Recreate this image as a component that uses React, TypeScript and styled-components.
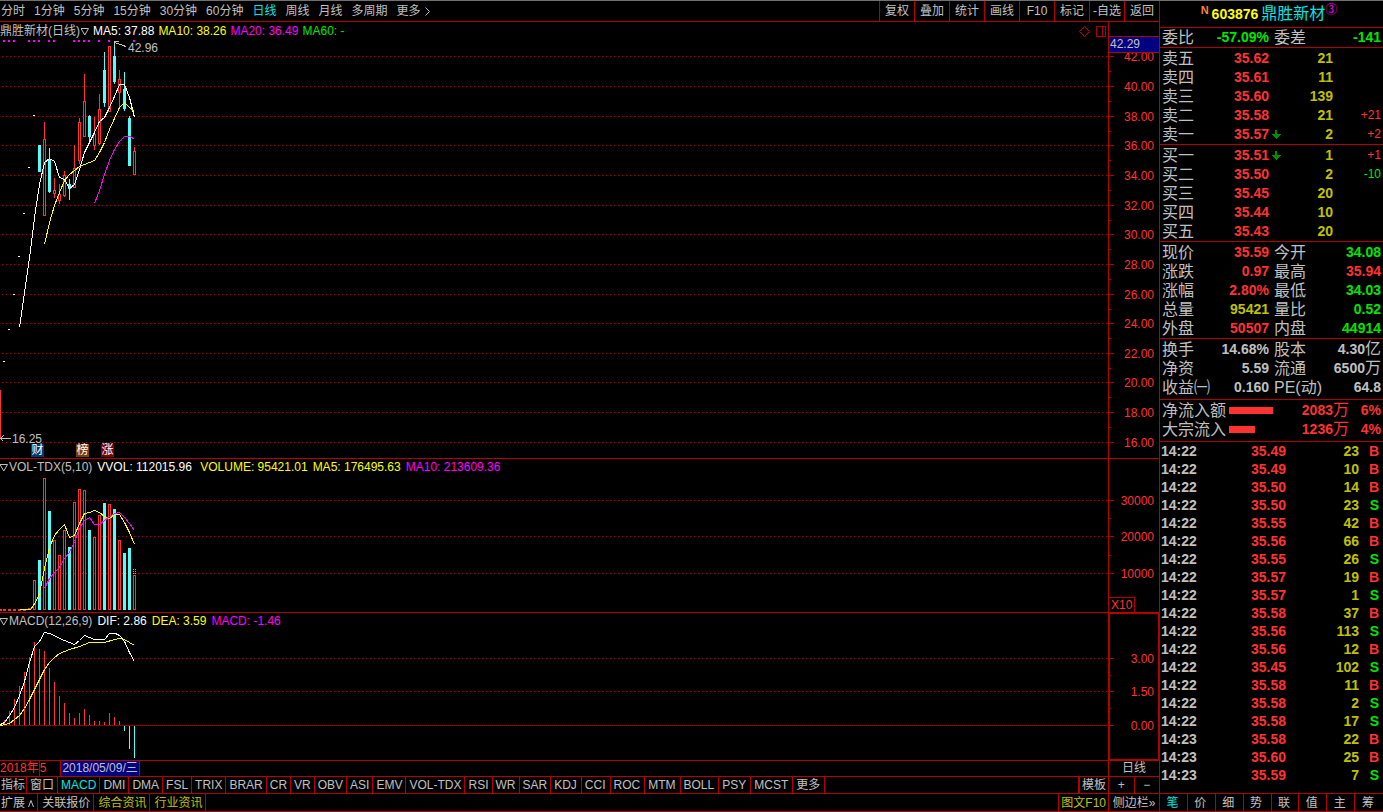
import React from "react";
import styled, { createGlobalStyle } from "styled-components";

const color = {
  line: "#b40000",
  red: "#ff3232",
  cyan: "#54fcfc",
  active: "#00e6e6",
  green: "#00e600",
  text: "#c0c0c0",
  gold: "#c0c000",
  yellow: "#ffff00",
  magenta: "#ff00ff",
  navy: "#000080",
};

const GlobalStyle = createGlobalStyle`
  * { box-sizing: border-box; }
  body {
    margin: 0;
    background: #000;
    color: ${color.text};
    font-family: "Liberation Sans", "Noto Sans CJK SC", sans-serif;
    font-size: 12px;
  }
`;

/* ---------- shell ---------- */

const Page = styled.div`
  display: grid;
  grid-template-columns: minmax(0, 1fr) 224px;
  min-height: 100vh;
  border-top: 1px solid #707070;
  background: #000;
`;

const Workspace = styled.main`
  display: flex;
  flex-direction: column;
  min-width: 0;
`;

const Button = styled.button<{ $color?: string }>`
  margin: 0;
  padding: 0;
  border: 0;
  background: none;
  color: ${(p) => p.$color ?? color.text};
  font: inherit;
  line-height: inherit;
  white-space: nowrap;
  cursor: pointer;
`;

const Toolbar = styled.nav`
  display: flex;
  justify-content: space-between;
  height: 21px;
  line-height: 19px;
  border-bottom: 1px solid ${color.line};
`;

const Periods = styled.div`
  display: flex;
  align-items: center;
  gap: 9px;
  padding: 1px 0 0 1px;
`;

const MoreButton = styled(Button)`
  display: flex;
  align-items: center;
  gap: 4px;
`;

const Tools = styled.div`
  display: flex;
`;

const ToolButton = styled(Button)`
  width: 35px;
  padding-top: 1px;
  border-left: 1px solid ${color.line};
  text-align: center;
`;

/* ---------- chart panes ---------- */

const Pane = styled.section<{ $grow?: boolean }>`
  display: grid;
  grid-template-columns: minmax(0, 1fr) 51px;
  flex: ${(p) => (p.$grow ? "1 0 auto" : "0 0 auto")};
  border-bottom: 1px solid ${color.line};
`;

const Plot = styled.div`
  position: relative;
  min-width: 0;
  overflow: hidden;
`;

const Legend = styled.div<{ $height: number; $gap: number }>`
  display: flex;
  align-items: center;
  gap: ${(p) => p.$gap}px;
  height: ${(p) => p.$height}px;
  line-height: ${(p) => p.$height}px;
  white-space: nowrap;
`;

const LegendItem = styled.span<{ $color: string }>`
  color: ${(p) => p.$color};
`;

const LegendTitle = styled.span`
  display: flex;
  align-items: center;
  gap: 1px;
`;

const LegendTools = styled.span`
  display: flex;
  align-items: center;
  gap: 6px;
  margin-left: auto;
  padding-right: 1px;
`;

const Drawing = styled.svg<{ $height: number }>`
  display: block;
  width: 100%;
  height: ${(p) => p.$height}px;
  overflow: hidden;
`;

const Axis = styled.div<{ $framed?: boolean }>`
  position: relative;
  border-left: 1px solid ${color.line};
  box-shadow: ${(p) => (p.$framed ? `inset 0 0 0 1px ${color.line}` : "none")};
`;

const CursorPrice = styled.div`
  position: absolute;
  top: 14px;
  left: 0;
  right: 0;
  height: 17px;
  padding-left: 1px;
  border: solid ${color.line};
  border-width: 1px 0;
  background: ${color.navy};
  line-height: 14px;
`;

const Multiplier = styled.div`
  position: absolute;
  bottom: 0;
  left: 0;
  height: 15px;
  padding: 0 2px;
  border: solid ${color.line};
  border-width: 1px 1px 0 0;
  color: ${color.red};
  line-height: 15px;
`;

const Marker = styled.span<{ $x: number; $y: number }>`
  position: absolute;
  left: ${(p) => p.$x}px;
  top: ${(p) => p.$y}px;
  line-height: 12px;
`;

const Badge = styled(Marker)<{ $fill: string }>`
  width: 13px;
  height: 13px;
  background: ${(p) => p.$fill};
  color: #fff;
  line-height: 13px;
  text-align: center;
`;

/* ---------- bottom strips ---------- */

const Strip = styled.div<{ $height: number; $line?: number }>`
  display: grid;
  grid-template-columns: minmax(0, 1fr) 51px;
  height: ${(p) => p.$height}px;
  line-height: ${(p) => p.$line ?? p.$height - 1}px;
  border-bottom: 1px solid ${color.line};
`;

const StripMain = styled.div`
  display: flex;
  min-width: 0;
  overflow: hidden;
  white-space: nowrap;
`;

const StripSide = styled.div`
  display: flex;
  justify-content: center;
  border-left: 1px solid ${color.line};
`;

const Month = styled.span`
  color: ${color.red};
`;

const MonthDay = styled(Month)`
  border-left: 1px solid ${color.line};
`;

const CursorDate = styled.span`
  margin-left: 14px;
  padding: 0 1px;
  border: solid ${color.line};
  border-width: 0 1px;
  background: ${color.navy};
`;

const Tab = styled(Button)`
  padding: 0 3px;
  border-right: 1px solid ${color.line};
  &:first-child {
    padding: 0 1px;
  }
  &:nth-child(n + 18) {
    padding-right: 4px;
  }
`;

const LinkTab = styled.a<{ $color?: string }>`
  padding: 0 3px 0 4px;
  border-right: 1px solid ${color.line};
  color: ${(p) => p.$color ?? color.text};
  text-decoration: none;
  &:first-child {
    padding-left: 1px;
  }
`;

const EndButton = styled(Button)<{ $edge: number }>`
  margin-left: auto;
  padding: 0 2px;
  border-left: ${(p) => p.$edge}px solid ${color.line};
`;

const ZoomButton = styled(Button)`
  flex: 1;
  & + & {
    border-left: 1px solid ${color.line};
  }
`;

/* ---------- quote panel ---------- */

const Panel = styled.aside`
  display: flex;
  flex-direction: column;
  border-left: 1px solid ${color.line};
  font-size: 14px;
`;

const StockHead = styled.header`
  display: flex;
  align-items: center;
  justify-content: center;
  height: 27px;
  padding-right: 5px;
  border-bottom: 1px solid ${color.line};
  line-height: 26px;
`;

const StockFlag = styled.span`
  align-self: flex-start;
  margin-right: 3px;
  color: #ff8040;
  font-size: 11px;
  font-weight: 700;
  line-height: 18px;
`;

const StockCode = styled.span`
  margin-right: 3px;
  color: ${color.yellow};
  font-weight: 700;
`;

const StockName = styled.span`
  color: ${color.active};
  font-size: 16px;
`;

const StockNote = styled.span`
  align-self: flex-start;
  color: ${color.magenta};
  font-size: 12px;
  line-height: 18px;
`;

const Block = styled.div<{ $top?: number; $bottom?: number }>`
  padding: ${(p) => p.$top ?? 1}px 2px ${(p) => p.$bottom ?? 0}px;
  border-bottom: 1px solid ${color.line};
`;

const Ticks = styled.div`
  flex: 1;
  padding: 0 2px 0 1px;
  border-bottom: 1px solid ${color.line};
`;

const Table = styled.table`
  width: 100%;
  border-collapse: collapse;
  table-layout: fixed;
`;

const Label = styled.th<{ $w?: number; $gap?: number }>`
  width: ${(p) => (p.$w ? `${p.$w}px` : "auto")};
  height: 19px;
  padding: 0 0 0 ${(p) => p.$gap ?? 0}px;
  color: ${color.text};
  font-size: 16px;
  font-weight: 400;
  line-height: 19px;
  text-align: left;
  white-space: nowrap;
`;

const Num = styled.td<{ $w?: number; $color?: string }>`
  width: ${(p) => (p.$w ? `${p.$w}px` : "auto")};
  height: 19px;
  padding: 0;
  color: ${(p) => p.$color ?? color.text};
  font-weight: 700;
  line-height: 19px;
  text-align: right;
  white-space: nowrap;
`;

const Delta = styled(Num)`
  font-size: 12px;
  font-weight: 400;
`;

const Unit = styled.span`
  font-size: 16px;
  font-weight: 400;
  line-height: 1;
`;

const ArrowCell = styled.td`
  width: 12px;
  padding: 0 0 0 3px;
  line-height: 0;
`;

const FlowCell = styled.td`
  padding: 0 0 0 3px;
`;

const FlowBar = styled.div`
  height: 7px;
  background: ${color.red};
`;

const TickCell = styled.td<{ $w?: number; $color?: string; $left?: boolean }>`
  width: ${(p) => (p.$w ? `${p.$w}px` : "auto")};
  height: 18px;
  padding: 0;
  color: ${(p) => p.$color ?? color.text};
  font-weight: 700;
  line-height: 18px;
  text-align: ${(p) => (p.$left ? "left" : "right")};
`;

const SideCell = styled(TickCell)`
  padding-right: 2px;
`;

const PanelTabs = styled.nav`
  display: grid;
  grid-template-columns: repeat(8, 1fr);
  height: 18px;
  border-bottom: 1px solid ${color.line};
  font-size: 12px;
  line-height: 17px;
`;

const PanelTab = styled(Button)`
  padding: 1px 2px 0 0;
  line-height: 16px;
  border-right: 1px solid ${color.line};
  &:last-child {
    border-right: 0;
  }
`;

/* ---------- data ---------- */

const periods = ["分时", "1分钟", "5分钟", "15分钟", "30分钟", "60分钟", "日线", "周线", "月线", "多周期"];
const tools = ["复权", "叠加", "统计", "画线", "F10", "标记", "-自选", "返回"];
const indicators =
  "指标 窗口 MACD DMI DMA FSL TRIX BRAR CR VR OBV ASI EMV VOL-TDX RSI WR SAR KDJ CCI ROC MTM BOLL PSY MCST 更多".split(" ");

type Level = [number, string];
const priceLevels: Level[] = [
  [56, "42.00"], [86, "40.00"], [116, "38.00"], [145, "36.00"], [175, "34.00"], [205, "32.00"], [234, "30.00"],
  [264, "28.00"], [294, "26.00"], [323, "24.00"], [353, "22.00"], [382, "20.00"], [412, "18.00"], [442, "16.00"],
];
const volumeLevels: Level[] = [[500, "30000"], [536, "20000"], [573, "10000"]];
const macdLevels: Level[] = [[658, "3.00"], [691, "1.50"], [725, "0.00"]];

/* x, rising, high, body top, body bottom, low */
type Candle = [number, boolean, number, number, number, number];
const candles: Candle[] = [
  [39, false, 145, 145, 172, 172], [44, true, 122, 139, 216, 216], [49, false, 148, 160, 192, 193],
  [54, true, 178, 190, 194, 198], [59, true, 184, 194, 201, 204], [64, true, 171, 175, 196, 197],
  [69, false, 179, 184, 189, 200], [74, true, 145, 168, 188, 188], [79, true, 118, 122, 161, 164],
  [84, true, 74, 101, 137, 137], [89, false, 115, 116, 137, 144], [94, true, 117, 134, 146, 150],
  [99, true, 94, 109, 144, 145], [104, false, 52, 70, 103, 107], [109, true, 46, 46, 112, 112],
  [114, false, 42, 56, 82, 84], [119, true, 70, 79, 93, 107], [124, false, 72, 89, 109, 111],
  [129, false, 116, 118, 166, 166], [134, true, 147, 151, 175, 175],
];
const limitDays = [[4, 361], [9, 329], [14, 294], [19, 256], [24, 213], [29, 167], [34, 115]];
const eventDots = [4, 9, 14, 29, 34, 39, 49, 54, 74, 79, 84, 89, 99, 109, 134];

const ma5 =
  "19,327 30,250 35,210 39,184 44,162 49,158 54,161 59,177 64,179 69,188 74,184 79,169 84,152 89,142 94,132 99,121 104,117 109,107 114,96 119,84 124,84 129,97 134,117";
const ma10 =
  "44,244 49,222 54,205 59,192 64,180 69,174 74,170 79,166 84,164 89,162 94,160 99,152 104,142 109,129 114,118 119,107 124,102 129,107 134,111";
const ma20 = "94,203 99,190 104,174 109,160 114,149 119,141 124,136 130,136 134,139";

/* x, rising, top */
const volumes: [number, boolean, number][] = [
  [34, true, 580], [39, false, 560], [44, true, 478], [49, false, 511], [54, true, 540], [59, true, 555],
  [64, true, 530], [69, false, 547], [74, true, 502], [79, true, 489], [84, true, 490], [89, false, 530],
  [94, true, 537], [99, true, 515], [104, false, 503], [109, true, 504], [114, false, 509], [119, true, 540],
  [124, false, 553], [129, false, 548], [134, true, 575],
];
const volMa5 =
  "19,609 30,609 35,602 39,593 44,568 49,547 54,535 59,529 64,524 69,537 74,535 79,523 84,513 89,512 94,510 99,512 104,516 109,518 114,514 119,514 124,522 129,532 134,544";
const volMa10 =
  "44,588 49,578 54,572 59,567 64,558 69,552 74,541 79,528 84,520 89,517 94,524 99,524 104,520 109,516 114,513 119,512 124,517 129,523 134,530";

const macdBars = [
  720, 711, 699, 686, 672, 657, 642, 649, 651, 668, 682, 696, 703, 713, 718, 713, 709, 715, 721, 721, 722, 713, 717,
  721, 730, 748, 757,
];
const dif =
  "0,724 4,722 9,715 14,707 19,695 24,681 29,662 34,646 39,641 44,632 49,633 54,635 59,638 64,640 69,642 74,644 79,640 84,635 89,637 94,639 104,639 109,633 115,633 119,635 124,641 129,652 134,661";
const dea =
  "0,725 9,723 14,719 19,715 24,708 29,699 34,689 39,679 44,669 49,662 54,657 59,653 64,651 69,649 79,646 89,642 104,642 114,639 119,638 124,639 129,642 134,645";

const asks: string[][] = [
  ["卖五", "35.62", "21", ""], ["卖四", "35.61", "11", ""], ["卖三", "35.60", "139", ""],
  ["卖二", "35.58", "21", "+21"], ["卖一", "35.57", "2", "+2"],
];
const bids: string[][] = [
  ["买一", "35.51", "1", "+1"], ["买二", "35.50", "2", "-10"], ["买三", "35.45", "20", ""],
  ["买四", "35.44", "10", ""], ["买五", "35.43", "20", ""],
];

type Quote = [string, string, string, string, string, string];
const quotes: Quote[] = [
  ["现价", "35.59", color.red, "今开", "34.08", color.green],
  ["涨跌", "0.97", color.red, "最高", "35.94", color.red],
  ["涨幅", "2.80%", color.red, "最低", "34.03", color.green],
  ["总量", "95421", color.gold, "量比", "0.52", color.green],
  ["外盘", "50507", color.red, "内盘", "44914", color.green],
];
const ratios: Quote[] = [
  ["换手", "14.68%", color.text, "股本", "4.30亿", color.text],
  ["净资", "5.59", color.text, "流通", "6500万", color.text],
  ["收益㈠", "0.160", color.text, "PE(动)", "64.8", color.text],
];
const flows: [string, number, string, string][] = [
  ["净流入额", 44, "2083", "6%"],
  ["大宗流入", 26, "1236", "4%"],
];
const ticks = [
  "14:22 35.49 23 B", "14:22 35.49 10 B", "14:22 35.50 14 B", "14:22 35.50 23 S", "14:22 35.55 42 B",
  "14:22 35.56 66 B", "14:22 35.55 26 S", "14:22 35.57 19 B", "14:22 35.57 1 S", "14:22 35.58 37 B",
  "14:22 35.56 113 S", "14:22 35.56 12 B", "14:22 35.45 102 S", "14:22 35.58 11 B", "14:22 35.58 2 S",
  "14:22 35.58 17 S", "14:23 35.58 22 B", "14:23 35.60 25 B", "14:23 35.59 7 S",
].map((t) => t.split(" "));

/* ---------- drawing helpers ---------- */

const Triangle = () => (
  <svg width="8" height="9" viewBox="0 0 8 9" fill="none" stroke={color.text}>
    <path d="M0 1.5H7.500L3.800 8Z" />
  </svg>
);

const GridLines = ({ levels, solidLast }: { levels: Level[]; solidLast?: boolean }) => (
  <>
    {levels.map(([y], i) => (
      <line
        key={y}
        x1="2"
        x2="100%"
        y1={y + 0.5}
        y2={y + 0.5}
        stroke={color.line}
        strokeDasharray={solidLast && i === levels.length - 1 ? "1 1" : "1 3"}
      />
    ))}
  </>
);

const Curve = ({ points, stroke }: { points: string; stroke: string }) => (
  <polyline points={points} fill="none" stroke={stroke} transform="translate(0.5 0.5)" />
);

const AxisScale = ({ levels, origin, height }: { levels: Level[]; origin: number; height: number }) => (
  <Drawing $height={height} shapeRendering="crispEdges">
    <g transform={`translate(0 ${-origin})`}>
      {levels.map(([y, label], i) => {
        const next = levels[i + 1];
        const mid = next ? Math.round((y + next[0]) / 2) : 0;
        return (
          <g key={label}>
            <rect x="0" y={y} width="5" height="1" fill={color.line} />
            {next && <rect x="0" y={mid} width="2" height="1" fill={color.line} />}
            <text x="45" y={y + 5} textAnchor="end" fontSize="12" fill={color.red}>
              {label}
            </text>
          </g>
        );
      })}
    </g>
  </Drawing>
);

const PriceDrawing = () => (
  <Drawing $height={418} shapeRendering="crispEdges">
    <g transform="translate(0 -40)">
      <GridLines levels={priceLevels} />
      {eventDots.map((x) => (
        <rect key={x} x={x - 1} y="40" width="2" height="2" fill={color.magenta} />
      ))}
      <rect x="0" y="390" width="1" height="48" fill={color.red} />
      {limitDays.map(([x, y]) => (
        <rect key={x} x={x - 1} y={y} width="2" height="1" fill="#fff" />
      ))}
      {candles.map(([x, up, high, top, bottom, low]) =>
        up ? (
          <g key={x} fill={color.red}>
            <rect x={x} y={high} width="1" height={top - high} />
            <rect x={x} y={bottom} width="1" height={low - bottom} />
            <rect x={x - 0.5} y={top + 0.5} width="2" height={bottom - top - 1} fill="none" stroke={color.red} />
          </g>
        ) : (
          <g key={x} fill={color.cyan}>
            <rect x={x} y={high} width="1" height={low - high} />
            <rect x={x - 1} y={top} width="3" height={bottom - top} />
          </g>
        ),
      )}
      <Curve points={ma5} stroke="#fff" />
      <Curve points={ma10} stroke={color.yellow} />
      <Curve points={ma20} stroke={color.magenta} />
      <path d="M126 46.500L114.500 42.500M118.500 41.500H114.500V46" fill="none" stroke={color.text} />
      <path d="M11 438.500H0.500M3.500 435.500L0.500 438.500L3.500 441.500" fill="none" stroke={color.text} />
    </g>
  </Drawing>
);

const VolumeDrawing = () => (
  <Drawing $height={137} shapeRendering="crispEdges">
    <g transform="translate(0 -475)">
      <GridLines levels={volumeLevels} />
      {[0, 4, 9, 14, 19, 24].map((x) => (
        <rect key={x} x={x - 1} y="609" width="3" height="2" fill={color.red} />
      ))}
      <rect x="28" y="608" width="3" height="2" fill={color.red} />
      {volumes.map(([x, up, top]) =>
        up ? (
          <rect key={x} x={x - 0.5} y={top + 0.5} width="2" height={609 - top} fill="none" stroke={color.red} />
        ) : (
          <rect key={x} x={x - 1} y={top} width="3" height={610 - top} fill={color.cyan} />
        ),
      )}
      {[569, 571, 573].map((y) => (
        <path key={y} d={`M133 ${y + 0.5}h1m1 0h1`} stroke={color.gold} />
      ))}
      <Curve points={volMa5} stroke={color.yellow} />
      <Curve points={volMa10} stroke={color.magenta} />
    </g>
  </Drawing>
);

const MacdDrawing = () => (
  <Drawing $height={131} shapeRendering="crispEdges">
    <g transform="translate(0 -629)">
      <GridLines levels={macdLevels} solidLast />
      {macdBars.map((y, i) => (
        <rect
          key={i}
          x={4 + i * 5}
          y={Math.min(y, 726)}
          width="1"
          height={Math.abs(725 - y)}
          fill={y < 725 ? color.red : color.cyan}
        />
      ))}
      <Curve points={dif} stroke="#fff" />
      <Curve points={dea} stroke={color.yellow} />
    </g>
  </Drawing>
);

/* ---------- panel parts ---------- */

const OrderTable = ({ rows }: { rows: string[][] }) => (
  <Table>
    <tbody>
      {rows.map(([label, price, qty, delta]) => (
        <tr key={label}>
          <Label scope="row" $w={48}>{label}</Label>
          <Num $w={59} $color={color.red}>{price}</Num>
          <ArrowCell>
            {label.endsWith("一") && (
              <svg width="9" height="10" viewBox="0 0 9 10" fill="#008c00" shapeRendering="crispEdges">
                <path d="M3 0H5V4H9V5H8V6H7V7H6V8H5V9H4V8H3V7H2V6H1V5H0V4H3Z" />
              </svg>
            )}
          </ArrowCell>
          <Num $w={52} $color={color.gold}>{qty}</Num>
          <Delta $color={delta.startsWith("-") ? color.green : color.red}>{delta}</Delta>
        </tr>
      ))}
    </tbody>
  </Table>
);

const withUnit = (value: string) => {
  const unit = /[亿万]$/.test(value) ? value.slice(-1) : "";
  return (
    <>
      {unit ? value.slice(0, -1) : value}
      {unit && <Unit>{unit}</Unit>}
    </>
  );
};

const QuoteTable = ({ rows }: { rows: Quote[] }) => (
  <Table>
    <tbody>
      {rows.map(([a, av, ac, b, bv, bc]) => (
        <tr key={a}>
          <Label scope="row" $w={48}>{a}</Label>
          <Num $w={59} $color={ac}>{av}</Num>
          <Label scope="row" $w={57} $gap={5}>{b}</Label>
          <Num $color={bc}>{withUnit(bv)}</Num>
        </tr>
      ))}
    </tbody>
  </Table>
);

export default function App() {
  return (
    <>
      <GlobalStyle />
      <Page>
        <Workspace>
          <Toolbar>
            <Periods>
              {periods.map((p) => (
                <Button key={p} $color={p === "日线" ? color.active : undefined}>{p}</Button>
              ))}
              <MoreButton>
                更多
                <svg width="5" height="9" viewBox="0 0 5 9" fill="none" stroke={color.text}>
                  <path d="M0.500 0.500L4.500 4.500L0.500 8.500" />
                </svg>
              </MoreButton>
            </Periods>
            <Tools>
              {tools.map((t) => (
                <ToolButton key={t}>{t}</ToolButton>
              ))}
            </Tools>
          </Toolbar>

          <Pane>
            <Plot>
              <Legend $height={18} $gap={4}>
                <LegendTitle>鼎胜新材(日线) <Triangle /></LegendTitle>
                <LegendItem $color="#fff">MA5: 37.88</LegendItem>
                <LegendItem $color={color.yellow}>MA10: 38.26</LegendItem>
                <LegendItem $color={color.magenta}>MA20: 36.49</LegendItem>
                <LegendItem $color={color.green}>MA60: -</LegendItem>
                <LegendTools>
                  <svg width="11" height="11" viewBox="0 0 11 11" fill="none" stroke="#d80000">
                    <path d="M5.500 0.500L10.500 5.500L5.500 10.500L0.500 5.500Z" />
                  </svg>
                  <svg width="11" height="11" viewBox="0 0 11 11" fill="none" stroke={color.line}>
                    <path d="M0.500 0.500H9.500V10.500H0.500ZM6.500 0.500V10.500" />
                  </svg>
                </LegendTools>
              </Legend>
              <PriceDrawing />
              <Marker $x={128} $y={20}>42.96</Marker>
              <Marker $x={12} $y={411}>16.25</Marker>
              <Badge $x={31} $y={422} $fill="#003870">财</Badge>
              <Badge $x={76} $y={422} $fill="#804000">榜</Badge>
              <Badge $x={101} $y={422} $fill="#800000">涨</Badge>
            </Plot>
            <Axis>
              <AxisScale levels={priceLevels} origin={22} height={436} />
              <CursorPrice>42.29</CursorPrice>
            </Axis>
          </Pane>

          <Pane>
            <Plot>
              <Legend $height={16} $gap={5}>
                <LegendTitle><Triangle />VOL-TDX(5,10)</LegendTitle>
                <LegendItem $color="#fff">VVOL: 112015.96</LegendItem>
                <LegendItem $color={color.yellow}>&nbsp;VOLUME: 95421.01</LegendItem>
                <LegendItem $color={color.yellow}>MA5: 176495.63</LegendItem>
                <LegendItem $color={color.magenta}>MA10: 213609.36</LegendItem>
              </Legend>
              <VolumeDrawing />
            </Plot>
            <Axis>
              <AxisScale levels={volumeLevels} origin={459} height={153} />
              <Multiplier>X10</Multiplier>
            </Axis>
          </Pane>

          <Pane $grow>
            <Plot>
              <Legend $height={16} $gap={5}>
                <LegendTitle><Triangle />MACD(12,26,9)</LegendTitle>
                <LegendItem $color="#fff">DIF: 2.86</LegendItem>
                <LegendItem $color={color.yellow}>DEA: 3.59</LegendItem>
                <LegendItem $color={color.magenta}>MACD: -1.46</LegendItem>
              </Legend>
              <MacdDrawing />
            </Plot>
            <Axis $framed>
              <AxisScale levels={macdLevels} origin={613} height={147} />
            </Axis>
          </Pane>

          <Strip $height={16}>
            <StripMain>
              <Month>2018年</Month>
              <MonthDay>5</MonthDay>
              <CursorDate>2018/05/09/三</CursorDate>
            </StripMain>
            <StripSide>日线</StripSide>
          </Strip>

          <Strip $height={17}>
            <StripMain>
              {indicators.map((name) => (
                <Tab key={name} $color={name === "MACD" ? color.active : undefined}>{name}</Tab>
              ))}
              <EndButton $edge={2}>模板</EndButton>
            </StripMain>
            <StripSide>
              <ZoomButton>+</ZoomButton>
              <ZoomButton>−</ZoomButton>
            </StripSide>
          </Strip>

          <Strip $height={18} $line={19}>
            <StripMain>
              <LinkTab href="#extend">
                扩展{" "}
                <svg width="6" height="7" viewBox="0 0 6 7" fill="none" stroke={color.text}>
                  <path d="M0.500 7L3 0.500L5.500 7" />
                </svg>
              </LinkTab>
              <LinkTab href="#related">关联报价</LinkTab>
              <LinkTab href="#news" $color={color.gold}>综合资讯</LinkTab>
              <LinkTab href="#industry" $color={color.gold}>行业资讯</LinkTab>
              <EndButton $edge={1} $color={color.gold}>图文F10</EndButton>
            </StripMain>
            <StripSide>
              <Button>侧边栏»</Button>
            </StripSide>
          </Strip>
        </Workspace>

        <Panel>
          <StockHead>
            <StockFlag>N</StockFlag>
            <StockCode>603876</StockCode>
            <StockName>鼎胜新材</StockName>
            <StockNote>③</StockNote>
          </StockHead>
          <Block $top={0}>
            <QuoteTable rows={[["委比", "-57.09%", color.green, "委差", "-141", color.green]]} />
          </Block>
          <Block><OrderTable rows={asks} /></Block>
          <Block><OrderTable rows={bids} /></Block>
          <Block><QuoteTable rows={quotes} /></Block>
          <Block $bottom={2}><QuoteTable rows={ratios} /></Block>
          <Block $bottom={2}>
            <Table>
              <tbody>
                {flows.map(([label, bar, value, share]) => (
                  <tr key={label}>
                    <Label scope="row" $w={64}>{label}</Label>
                    <FlowCell><FlowBar style={{ width: bar }} /></FlowCell>
                    <Num $w={60} $color={color.red}>{value}<Unit>万</Unit></Num>
                    <Num $w={32} $color={color.red}>{share}</Num>
                  </tr>
                ))}
              </tbody>
            </Table>
          </Block>
          <Ticks>
            <Table>
              <tbody>
                {ticks.map(([time, price, qty, side], i) => (
                  <tr key={i}>
                    <TickCell $w={48} $left>{time}</TickCell>
                    <TickCell $w={77} $color={color.red}>{price}</TickCell>
                    <TickCell $w={73} $color={color.gold}>{qty}</TickCell>
                    <SideCell $color={side === "B" ? color.red : color.green}>{side}</SideCell>
                  </tr>
                ))}
              </tbody>
            </Table>
          </Ticks>
          <PanelTabs>
            {"笔价细势联值主筹".split("").map((t) => (
              <PanelTab key={t} $color={t === "笔" ? color.active : undefined}>{t}</PanelTab>
            ))}
          </PanelTabs>
        </Panel>
      </Page>
    </>
  );
}
